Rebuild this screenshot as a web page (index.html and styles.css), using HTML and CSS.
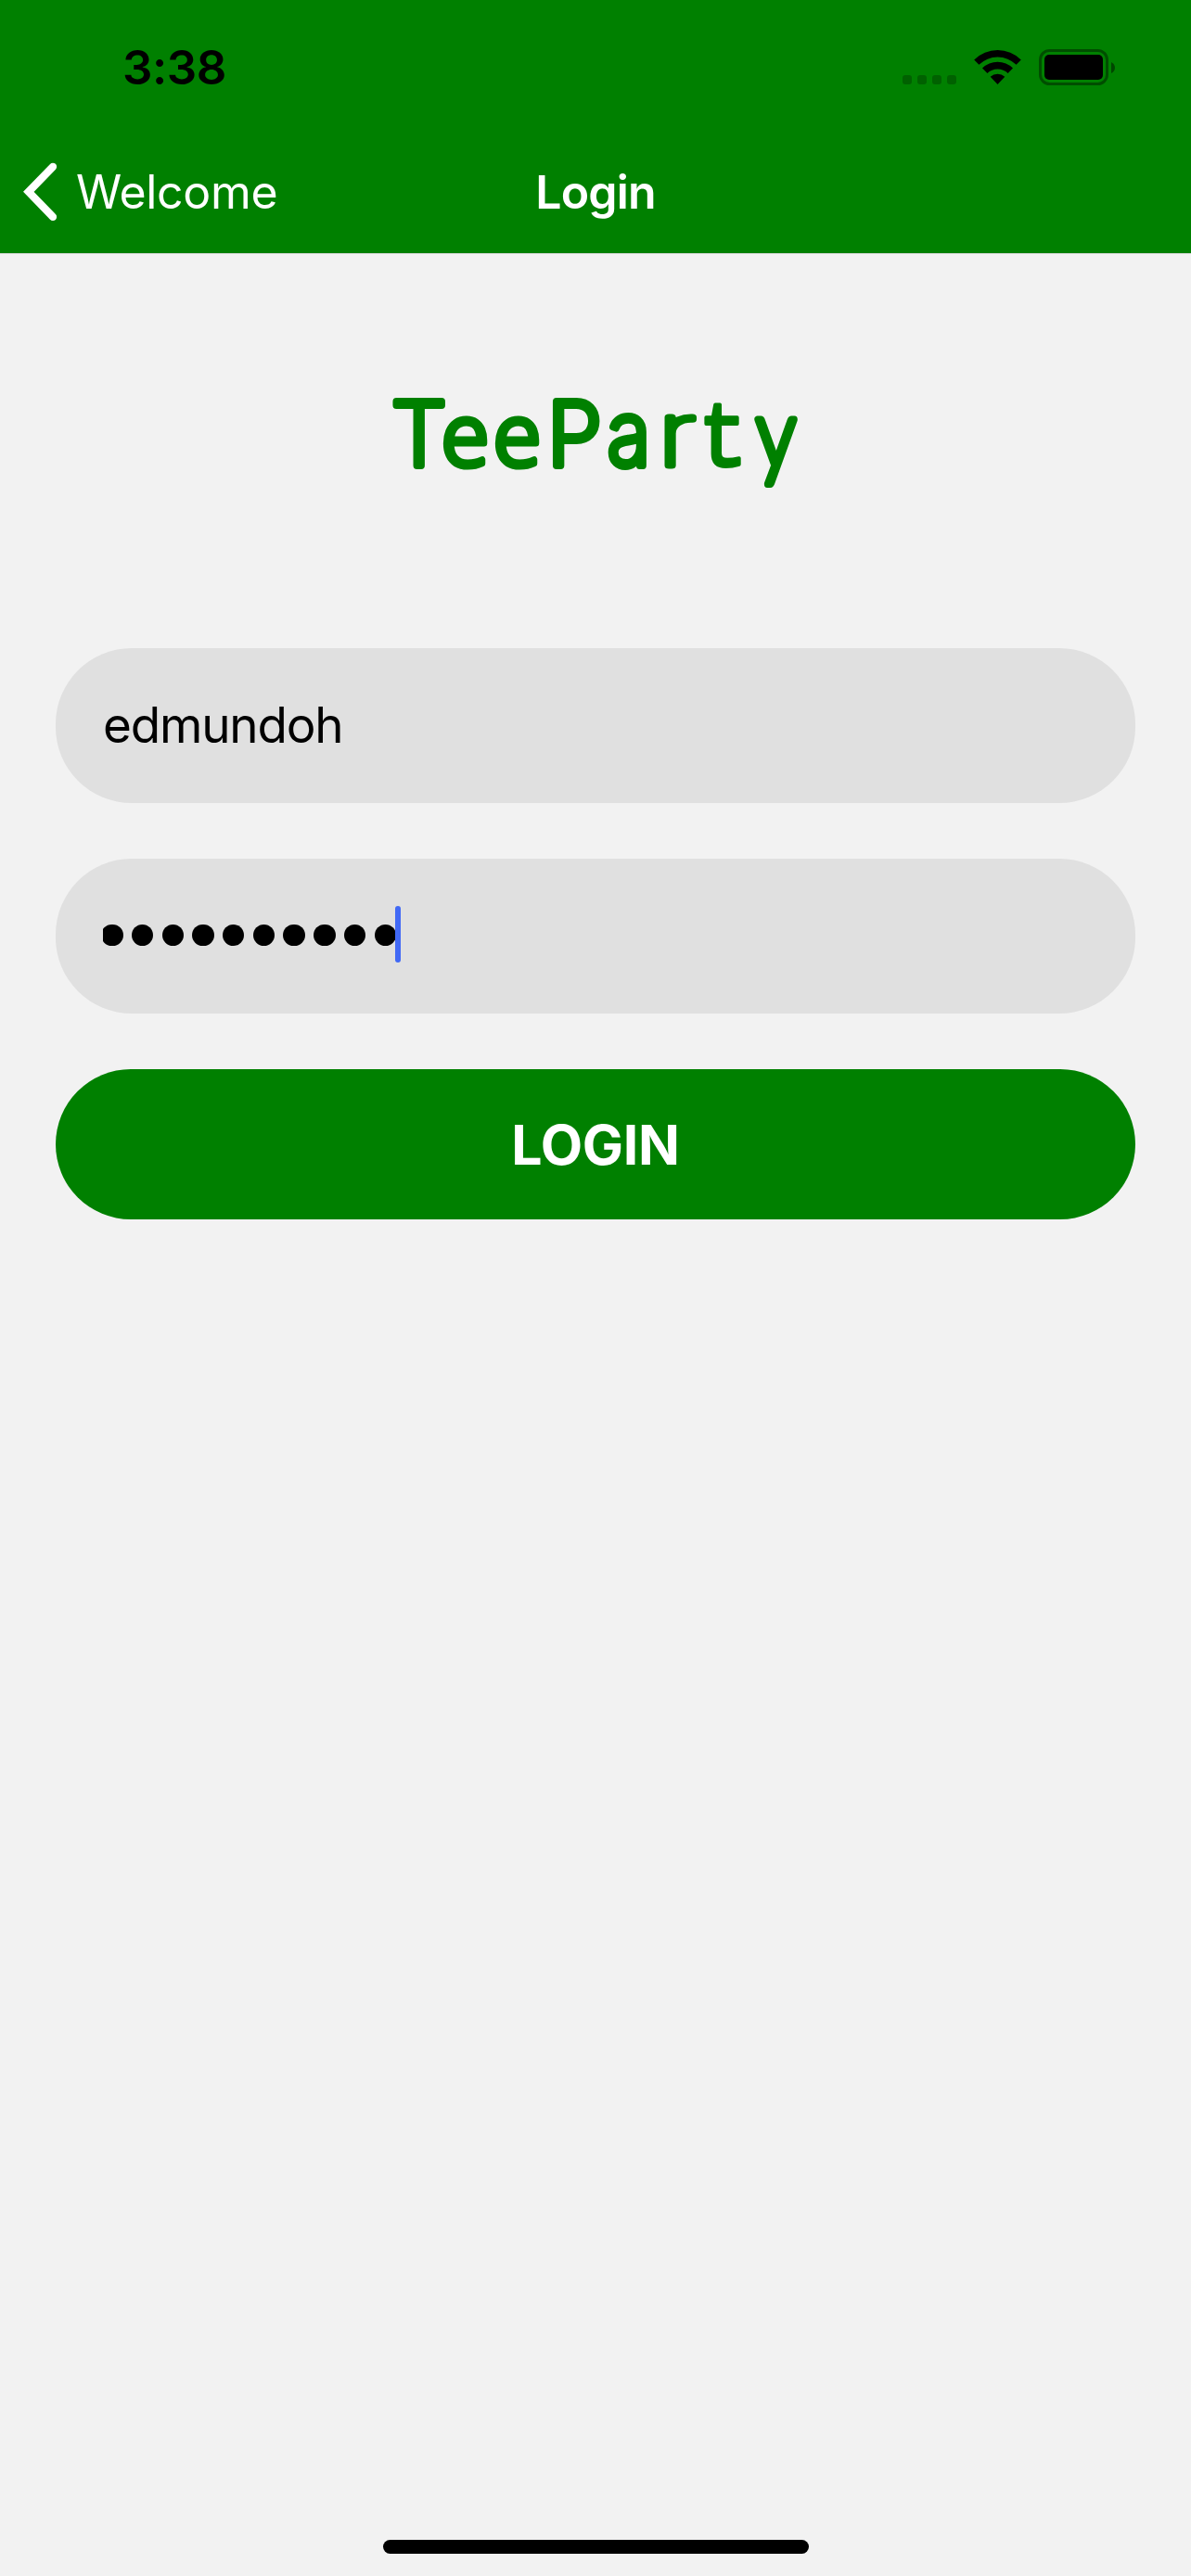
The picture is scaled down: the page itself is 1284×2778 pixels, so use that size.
FILE: index.html
```html
<!DOCTYPE html>
<html lang="en">
<head>
<meta charset="utf-8">
<title>Login</title>
<link rel="stylesheet" href="styles.css">
</head>
<body>
<div class="screen">
  <header class="header">
    <div class="status">
      <span class="time">3:38</span>
      <svg class="status-icons" width="240" height="60" viewBox="970 40 240 60" aria-hidden="true">
        <g opacity=".24">
          <rect x="973" y="81" width="10" height="10" rx="3"/>
          <rect x="989" y="81" width="10" height="10" rx="3"/>
          <rect x="1005" y="81" width="10" height="10" rx="3"/>
          <rect x="1021" y="81" width="10" height="10" rx="3"/>
        </g>
        <path d="M1050.2 64.5A36 36 0 0 1 1100.8 64.5L1095.6 69.8A28.6 28.6 0 0 0 1055.4 69.8Z"/>
        <path d="M1059 73.6A23.6 23.6 0 0 1 1092 73.6L1086.6 79A15.8 15.8 0 0 0 1064.4 79Z"/>
        <path d="M1067.7 82.7A11.5 11.5 0 0 1 1083.3 82.7L1075.5 91Z"/>
        <rect x="1121.5" y="54.5" width="72" height="36" rx="10" fill="none" stroke="#000" stroke-width="3" opacity=".4"/>
        <rect x="1126" y="59" width="63" height="27" rx="5"/>
        <path d="M1198 67Q1202 69 1202 73T1198 79Z" opacity=".45"/>
      </svg>
    </div>
    <nav class="navbar">
      <a class="back">
        <svg width="40" height="66" viewBox="23 174 40 66" fill="none" stroke="#fff" stroke-width="8.3" stroke-linecap="round" aria-hidden="true"><path d="M57 179.8L30.8 206.8L57 233.9"/></svg>
        <span class="back-label">Welcome</span>
      </a>
      <h1 class="title">Login</h1>
      <span></span>
    </nav>
  </header>
  <main class="content">
    <svg class="logo" width="480" height="150" viewBox="400 400 480 150">
      <text class="logo-text" y="502"><tspan x="420">T</tspan><tspan class="logo-e" x="474 530">ee</tspan><tspan x="588">P</tspan><tspan x="653" textLength="46" lengthAdjust="spacingAndGlyphs">a</tspan><tspan class="logo-r" x="707" textLength="41" lengthAdjust="spacingAndGlyphs">r</tspan><tspan class="logo-t" x="751" textLength="53" lengthAdjust="spacingAndGlyphs">t</tspan><tspan class="logo-y" x="813" y="504" textLength="43" lengthAdjust="spacingAndGlyphs">y</tspan></text>
    </svg>
    <form class="form">
      <div class="field"><span class="username">edmundoh</span></div>
      <div class="field">
        <div class="password"><i></i><i></i><i></i><i></i><i></i><i></i><i></i><i></i><i></i><i></i></div>
        <span class="caret"></span>
      </div>
      <button class="submit" type="button"><span>LOGIN</span></button>
    </form>
  </main>
  <div class="home-indicator"></div>
</div>
</body>
</html>
```

FILE: styles.css
```css
* { box-sizing: border-box; }
body { margin: 0; background: #f2f2f2; font-family: Inter, "Liberation Sans", sans-serif; }
.screen { display: flex; flex-direction: column; width: 1284px; height: 2778px; background: #f2f2f2; }
.header { height: 274px; background: #008000; border-bottom: 1px solid #d9d9d9; }
.status { display: flex; justify-content: space-between; height: 141px; padding: 40px 74px 0 132px; }
.time { font-size: 51px; font-weight: 600; line-height: 66px; color: #000; letter-spacing: -.5px; }
.status-icons { display: block; }
.navbar { display: grid; grid-template-columns: 1fr auto 1fr; align-items: center; height: 132px; padding: 0 23px; color: #fff; }
.back { display: flex; align-items: center; gap: 19px; }
.back-label { font-size: 50px; line-height: 60px; font-weight: 400; letter-spacing: -.3px; }
.title { margin: 0; font-size: 50px; line-height: 60px; font-weight: 600; letter-spacing: -.8px; }
.content { display: flex; flex-direction: column; align-items: center; flex: 1; padding: 126px 60px 0; }
.logo { display: block; }
.logo-text { font-family: Inter, sans-serif; font-size: 95px; font-weight: 200; fill: #008000; stroke: #008000; stroke-width: 8px; stroke-linejoin: round; stroke-linecap: round; }
.logo-e { font-family: "Open Sans", sans-serif; font-size: 93px; font-weight: 300; stroke-width: 7px; }
.logo-r { font-weight: 100; stroke-width: 7px; }
.logo-t { font-family: "Liberation Mono", monospace; font-size: 98px; font-weight: 400; stroke-width: 4px; }
.logo-y { font-family: Lato, sans-serif; font-size: 103px; font-weight: 300; stroke-width: 8px; }
.form { display: flex; flex-direction: column; align-self: stretch; gap: 60px; margin-top: 149px; }
.field { display: flex; align-items: center; height: 167px; padding: 0 51px 2px; border-radius: 82px; background: #e0e0e0; }
.username { font-size: 53px; line-height: 64px; color: #000; letter-spacing: -1.2px; }
.password { display: flex; gap: 9.3px; overflow: hidden; width: 315px; }
.password i { flex: none; width: 23.4px; height: 23.4px; border-radius: 50%; background: #000; }
.password i:first-child { margin-left: -1.7px; }
.caret { width: 6px; height: 61px; margin-bottom: 2px; border-radius: 3px; background: #4169f5; }
.submit { height: 162px; padding: 2px 0 0; border: 0; border-radius: 81px; background: #008000; color: #fff; font: 700 59px/72px Inter, "Liberation Sans", sans-serif; letter-spacing: -.3px; }
.home-indicator { align-self: center; width: 459px; height: 15px; margin-bottom: 24px; border-radius: 8px; background: #000; }
```
